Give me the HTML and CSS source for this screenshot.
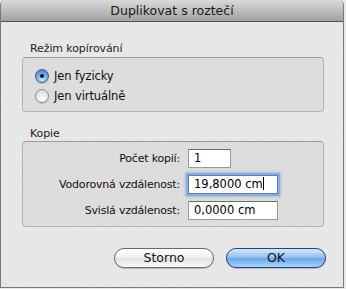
FILE: index.html
```html
<!DOCTYPE html>
<html>
<head>
	<meta charset="utf-8">
	<link rel="stylesheet" href="styles.css">
</head>
<body>
<div class="window">
	<div class="titlebar">Duplikovat s roztečí</div>
	<div class="content">
		<div class="group-label first">Režim kopírování</div>
		<div class="box modes">
			<div class="radio-row"><span class="radio on"></span>Jen fyzicky</div>
			<div class="radio-row"><span class="radio"></span>Jen virtuálně</div>
		</div>

		<div class="group-label">Kopie</div>
		<div class="box copies">
			<div class="lbl">Počet kopií:</div>
			<div class="field short">1</div>
			<div class="lbl">Vodorovná vzdálenost:</div>
			<div class="field focused">19,8000 cm<span class="caret"></span></div>
			<div class="lbl">Svislá vzdálenost:</div>
			<div class="field">0,0000 cm</div>
		</div>

		<div class="buttons">
			<div class="btn">Storno</div>
			<div class="btn default">OK</div>
		</div>
	</div>
</div>
</body>
</html>
```

FILE: styles.css
```css
body {
	margin: 0;
	background: #e9e9e9;
	font-family: "DejaVu Sans", sans-serif;
	font-size: 11px;
	color: #111;
}

.window {
	width: 344px;
	height: 288px;
	box-sizing: border-box;
	border: 1px solid #7a7a7a;
	border-top: none;
	border-radius: 5px 5px 0 0;
	background: repeating-linear-gradient(45deg, #eaeaea 0 1px, #e6e6e6 1px 3px);
	overflow: hidden;
}

.titlebar {
	height: 21px;
	line-height: 21px;
	text-align: center;
	font-size: 12.5px;
	color: #1a1a1a;
	background: linear-gradient(#dadada, #bdbdbd 50%, #a2a2a2);
	border-bottom: 1px solid #555;
	border-radius: 5px 5px 0 0;
}

.content {
	padding: 0 17px 0 21px;
}

.group-label {
	height: 14px;
	line-height: 14px;
	padding-left: 8px;
	margin-top: 15px;
	color: #2a2222;
	letter-spacing: -0.1px;
}

.group-label.first {
	margin-top: 20px;
	margin-bottom: 1px;
}

.box {
	width: 302px;
	box-sizing: border-box;
	border: 1px solid #b4b4b4;
	border-top-color: #9c9c9c;
	border-radius: 4px;
	background: rgba(200, 200, 200, 0.35);
}

.modes {
	height: 55px;
	padding: 8px 0 0 12px;
}

.radio-row {
	height: 20px;
	display: flex;
	align-items: center;
	gap: 5px;
	font-size: 11.5px;
	letter-spacing: -0.1px;
}

.radio {
	width: 14px;
	height: 14px;
	box-sizing: border-box;
	border-radius: 50%;
	border: 1px solid #8c8c8c;
	background: radial-gradient(circle at 50% 75%, #ffffff, #e4e4e4 60%, #cfcfcf);
	box-shadow: 0 1px 1px rgba(0, 0, 0, 0.15);
	position: relative;
}

.radio.on {
	border-color: #3a5b8c;
	background: radial-gradient(circle at 50% 80%, #c9e6ff, #6aa4e4 55%, #3b78c8);
}

.radio.on::after {
	content: "";
	position: absolute;
	left: 4px;
	top: 4px;
	width: 4px;
	height: 4px;
	border-radius: 50%;
	background: #111;
}

.copies {
	height: 86px;
	padding: 7px 0 0 0;
	display: grid;
	grid-template-columns: 157px auto;
	column-gap: 8px;
	row-gap: 7px;
	align-items: center;
	align-content: start;
}

.lbl {
	text-align: right;
	font-size: 11px;
	letter-spacing: -0.2px;
}

.field {
	width: 90px;
	height: 19px;
	box-sizing: border-box;
	border: 1px solid #9a9a9a;
	border-top-color: #6e6e6e;
	background: #fff;
	padding-left: 5px;
	line-height: 17px;
	font-size: 11.5px;
	color: #000;
}

.field.short {
	width: 43px;
}

.field.focused {
	box-shadow: 0 0 0 2px #89acdf, 0 0 2px 3px rgba(120, 160, 220, 0.5);
	border-color: #5f7fb0;
}

.caret {
	display: inline-block;
	width: 1px;
	height: 13px;
	background: #000;
	vertical-align: -2px;
}

.buttons {
	margin-top: 21px;
	display: flex;
	justify-content: flex-end;
	gap: 12px;
}

.btn {
	width: 100px;
	height: 20px;
	box-sizing: border-box;
	border-radius: 10px;
	border: 1px solid #6a6a6a;
	background: linear-gradient(#ffffff, #f2f2f2 45%, #e2e2e2 55%, #fafafa);
	box-shadow: 0 1px 1px rgba(0, 0, 0, 0.2);
	text-align: center;
	line-height: 18px;
	font-size: 12.5px;
	color: #111;
}

.btn.default {
	border-color: #263f86;
	background: linear-gradient(#d4e7fb, #97c3f0 45%, #6aa7ea 55%, #a8d4fb);
}
```
